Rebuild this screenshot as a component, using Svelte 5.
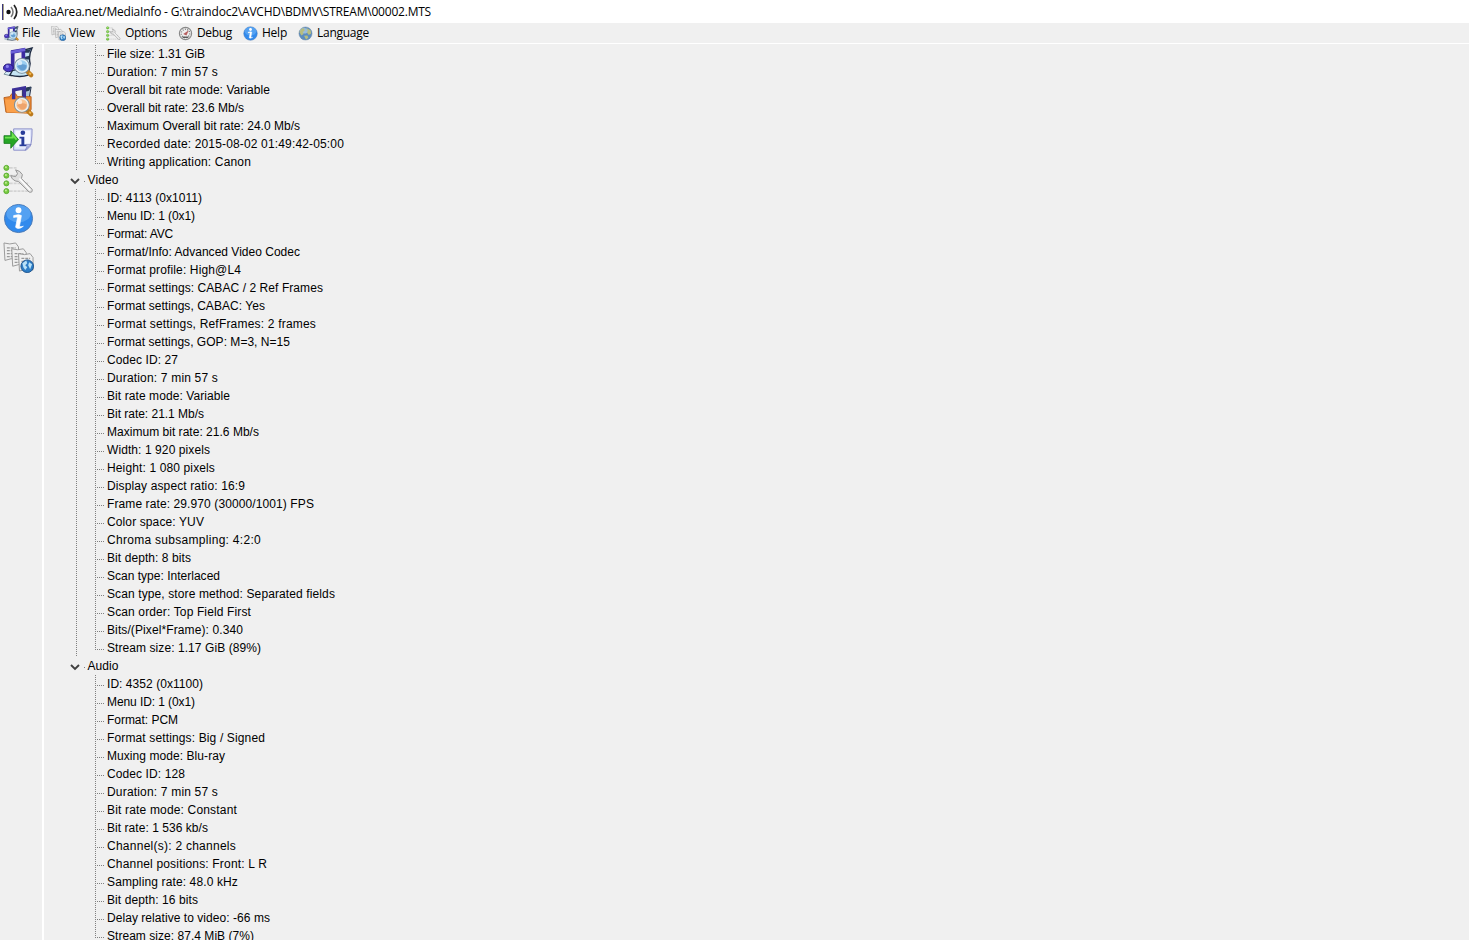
<script>
  const title =
    "MediaArea.net/MediaInfo - G:\\traindoc2\\AVCHD\\BDMV\\STREAM\\00002.MTS";

  const menus = [
    { label: "File", icon: "file", width: 47, text: 18 },
    { label: "View", icon: "export", width: 55, text: 26 },
    { label: "Options", icon: "options", width: 72, text: 42 },
    { label: "Debug", icon: "debug", width: 65, text: 35 },
    { label: "Help", icon: "info", width: 55, text: 25 },
    { label: "Language", icon: "globe", width: 80, text: 52 }
  ];

  const tools = ["file", "folder", "import", "options", "info", "export"];

  // each row: label and its rendered width in pixels
  const sections = [
    {
      name: "",
      rows: [
        ["File size: 1.31 GiB", 98],
        ["Duration: 7 min 57 s", 111],
        ["Overall bit rate mode: Variable", 163],
        ["Overall bit rate: 23.6 Mb/s", 137],
        ["Maximum Overall bit rate: 24.0 Mb/s", 193],
        ["Recorded date: 2015-08-02 01:49:42-05:00", 237],
        ["Writing application: Canon", 144]
      ]
    },
    {
      name: "Video",
      rows: [
        ["ID: 4113 (0x1011)", 95],
        ["Menu ID: 1 (0x1)", 88],
        ["Format: AVC", 66],
        ["Format/Info: Advanced Video Codec", 193],
        ["Format profile: High@L4", 134],
        ["Format settings: CABAC / 2 Ref Frames", 216],
        ["Format settings, CABAC: Yes", 158],
        ["Format settings, RefFrames: 2 frames", 209],
        ["Format settings, GOP: M=3, N=15", 183],
        ["Codec ID: 27", 71],
        ["Duration: 7 min 57 s", 111],
        ["Bit rate mode: Variable", 123],
        ["Bit rate: 21.1 Mb/s", 97],
        ["Maximum bit rate: 21.6 Mb/s", 152],
        ["Width: 1 920 pixels", 103],
        ["Height: 1 080 pixels", 108],
        ["Display aspect ratio: 16:9", 138],
        ["Frame rate: 29.970 (30000/1001) FPS", 207],
        ["Color space: YUV", 97],
        ["Chroma subsampling: 4:2:0", 154],
        ["Bit depth: 8 bits", 84],
        ["Scan type: Interlaced", 113],
        ["Scan type, store method: Separated fields", 228],
        ["Scan order: Top Field First", 144],
        ["Bits/(Pixel*Frame): 0.340", 136],
        ["Stream size: 1.17 GiB (89%)", 154]
      ]
    },
    {
      name: "Audio",
      last: true,
      rows: [
        ["ID: 4352 (0x1100)", 96],
        ["Menu ID: 1 (0x1)", 88],
        ["Format: PCM", 71],
        ["Format settings: Big / Signed", 158],
        ["Muxing mode: Blu-ray", 118],
        ["Codec ID: 128", 78],
        ["Duration: 7 min 57 s", 111],
        ["Bit rate mode: Constant", 130],
        ["Bit rate: 1 536 kb/s", 101],
        ["Channel(s): 2 channels", 129],
        ["Channel positions: Front: L R", 160],
        ["Sampling rate: 48.0 kHz", 131],
        ["Bit depth: 16 bits", 91],
        ["Delay relative to video: -66 ms", 163],
        ["Stream size: 87.4 MiB (7%)", 147]
      ]
    }
  ];

  // stretch or tighten a label so that it fills the given width
  function fit(node, width) {
    const natural = node.getBoundingClientRect().width;
    node.style.letterSpacing = `${(width - natural) / node.textContent.length}px`;
  }
</script>

{#snippet icon(name)}
  <svg class="icon" viewBox="0 0 32 32" aria-hidden="true">
    {#if name === "file"}
      <path d="M5 24L10 26L9 30L1 28Z" fill="#d8eef9" stroke="#78909c" />
      <path d="M22 3L30 1Q26 9 28 17L26 29Q18 32 7 29L10 24L21 22Z" fill="#c5e4f4" stroke="#1d2941" stroke-width="1.4" />
      <path d="M23 3L29 2L27 6L22 6ZM23 10L27 9L27 13H22Z" fill="#273a57" />
      <path d="M10 23V5L21 3V17" fill="none" stroke="#3a2ba0" stroke-width="3.8" />
      <path d="M8 4L23 1V4L8 7Z" fill="#6c61d8" />
      <ellipse cx="5.5" cy="21.5" rx="5" ry="4" fill="#4938c2" stroke="#251878" />
      <circle cx="4.5" cy="20" r="1.6" fill="#8c83ed" />
      {@render lens("#9acdf0", "#518dc8")}
    {:else if name === "folder"}
      <path d="M20 3L29 1L27 13H20Z" fill="#a8c5d8" stroke="#202c47" />
      <path d="M23 2L29 1L27 5L23 6Z" fill="#273a57" />
      <path d="M1 12L7 11L9 8H13L15 11H29V24L27 28L3 27Z" fill="#ef8930" stroke="#b76120" />
      <path d="M11 14V4L22 2V12" fill="none" stroke="#3c3098" stroke-width="3.5" />
      <path d="M2 14H28L25 28L4 27Z" fill="#fba04a" />
      {@render lens("#fbc391", "#e99a60")}
    {:else if name === "import"}
      <path d="M11 4H30Q30 18 28 22L24 26H11Z" fill="#dfe5fb" stroke="#8a8ec8" />
      <path d="M13 6H28V19L23 23H13Z" fill="#f5f8ff" />
      <path d="M29 20L23 26Q26 22 24 20Z" fill="#b7bee8" stroke="#7378bb" stroke-width=".7" />
      <circle cx="20.5" cy="8" r="2.4" fill="#283d9b" />
      <path d="M17 12H22V20H24V22H17V20H19V14H17Z" fill="#283d9b" />
      <path d="M1 11H8V6L16 15L8 24V19H1Z" fill="#26a526" stroke="#13791a" stroke-width=".8" />
      <path d="M2 13H10V10L14 15" fill="none" stroke="#6ce34e" stroke-width="2" />
    {:else if name === "options"}
      {#each [4, 12, 20, 28] as y}
        <path d="M7 {y}H{y > 18 ? 27 : 14}" stroke="#d3d3d3" stroke-width="2" stroke-dasharray="3 1" />
        <circle cx="3.5" cy={y} r="2.6" fill="#77ca3f" stroke="#5fae38" />
        <circle cx="3" cy={y - 0.7} r="1" fill="#c5ef9a" />
      {/each}
      <path d="M8 12L13 13L15 10L13 6Q18 7 20 11L19 15L30 26Q31 30 27 29L16 18Q10 18 8 12Z" fill="#e0e0e0" stroke="#929292" />
      <path d="M17 15L28 27" stroke="#fff" stroke-width="1.5" />
    {:else if name === "info"}
      <circle cx="16" cy="16" r="14.5" fill="#318aed" stroke="#4a79b5" />
      <ellipse cx="16" cy="11" rx="12.5" ry="9" fill="#66adf5" opacity=".65" />
      <circle cx="16" cy="7.5" r="3" fill="#fff" />
      <path d="M11 13Q17 11 19 13L17 24Q18 25 21 24Q16 28 13 25L15 15Q14 14 11 15Z" fill="#fff" stroke="#fff" stroke-width=".7" />
    {:else if name === "export"}
      {#each [[1, 1], [9, 7], [16, 12]] as [x, y]}
        <path d="M{x} {y}Q{x + 6} {y + 2} {x + 12} {y}L{x + 15} {y + 4}V{y + 17}Q{x + 7} {y + 15} {x + 1} {y + 18}Z" fill="#f0f0f0" stroke="#999" />
        <path d="M{x + 3} {y + 5}h9m-9 3h9m-9 3h9m-9 3h9" stroke="#999" stroke-width="1.3" stroke-dasharray="3 1" />
      {/each}
      <circle cx="25" cy="25" r="6.5" fill="#2d7dc6" stroke="#1f558e" />
      <path d="M20 22L24 19L25 22L23 24L25 26L23 29L21 26ZM27 21L30 23L28 28L26 24Z" fill="#b9e1f7" />
    {:else if name === "globe"}
      <circle cx="16" cy="16" r="14" fill="#5b8cc0" stroke="#7390a8" />
      <ellipse cx="13" cy="10" rx="9" ry="6" fill="#b5d2e6" opacity=".7" />
      <path d="M3 13L7 6L13 5L14 10L10 13L12 17L7 20ZM18 4L27 9L28 16L23 19L19 14L21 10ZM13 21L20 20L22 25L17 29Z" fill="#b7bd7e" />
    {:else}
      <circle cx="16" cy="16" r="13" fill="#eee" stroke="#888" stroke-width="2.5" />
      <circle cx="16" cy="16" r="9" fill="none" stroke="#777" stroke-width="3" stroke-dasharray="2 3" />
      <path d="M11 17L23 9L18 20Z" fill="#b86060" />
      <path d="M10 24H22" stroke="#555" stroke-width="3" />
    {/if}
  </svg>
{/snippet}

{#snippet lens(light, deep)}
  <path d="M25 25L29 29" stroke="#bc7a1d" stroke-width="4.5" stroke-linecap="round" />
  <path d="M27 27L29 28" stroke="#f3ba4d" stroke-width="2" />
  <circle cx="19.5" cy="19.5" r="7.6" fill={light} stroke="#7c8f9c" stroke-width="1.2" />
  <circle cx="19.5" cy="19.5" r="6.4" fill="none" stroke="#e8f2f6" stroke-width="1.3" />
  <path d="M14.5 20Q19 16 24.5 19Q24 25 18.5 24Z" fill={deep} opacity=".75" />
  <circle cx="17.5" cy="16.5" r="2.3" fill="#fff" opacity=".6" />
{/snippet}

<div class="window">
  <header class="titlebar">
    <svg class="logo" viewBox="0 0 18 18" aria-hidden="true">
      <path d="M.5 1V17" stroke="#39367d" />
      <path d="M1.5 1V17" stroke="#a6a083" />
      <circle cx="6.5" cy="9" r="2.2" fill="#111" />
      <path d="M9 4Q13 9 9 14" fill="none" stroke="#777" stroke-width="1.5" />
      <path d="M12 2Q17.5 9 12 16" fill="none" stroke="#222" stroke-width="1.7" />
    </svg>
    <span class="title" use:fit={408}>{title}</span>
  </header>

  <nav class="menubar">
    {#each menus as menu}
      <div class="menu" style:width="{menu.width}px">
        {@render icon(menu.icon)}
        <span use:fit={menu.text}>{menu.label}</span>
      </div>
    {/each}
  </nav>

  <div class="body">
    <aside class="toolbar">
      {#each tools as tool}
        <button type="button" aria-label={tool}>{@render icon(tool)}</button>
      {/each}
    </aside>

    <main class="tree">
      {#each sections as section}
        {#if section.name}
          <div class="heading">
            <svg class="chevron" viewBox="0 0 10 7" aria-hidden="true">
              <path d="M1 1L5 5L9 1" />
            </svg>
            <i class="dot"></i>
            <span use:fit={31}>{section.name}</span>
          </div>
        {/if}
        <ul class:last={section.last}>
          {#each section.rows as [label, width]}
            <li>
              <i class="branch"></i>
              <span use:fit={width}>{label}</span>
            </li>
          {/each}
        </ul>
      {/each}
    </main>
  </div>
</div>

<style>
  :global(body) {
    overflow: hidden;
  }

  .window {
    display: flex;
    flex-direction: column;
    height: 940px;
    background: #f0f0f0;
    color: #000;
    font: 12px/18px "Liberation Sans", Arial, sans-serif;
    white-space: nowrap;
    overflow: hidden;
  }

  .titlebar {
    display: flex;
    flex: 0 0 23px;
    align-items: center;
    gap: 3px;
    padding-left: 2px;
    background: #fff;
    font-family: "Open Sans", "Noto Sans", sans-serif;
  }

  .logo {
    width: 18px;
    height: 18px;
  }

  .menubar {
    display: flex;
    flex: 0 0 20px;
    padding-left: 4px;
    border-bottom: 1px solid #fff;
    font-family: "Open Sans", "Noto Sans", sans-serif;
  }

  .menu {
    display: flex;
    flex: none;
    align-items: center;
    gap: 3px;
  }

  .menu:nth-child(n + 3) {
    gap: 4px;
  }

  .menu .icon {
    flex: none;
    width: 15px;
    height: 15px;
    margin-top: 1px;
  }

  .body {
    display: flex;
    flex: 1;
    min-height: 0;
  }

  .toolbar {
    display: flex;
    flex: 0 0 44px;
    flex-direction: column;
    box-sizing: border-box;
    border-right: 2px solid #fff;
  }

  .toolbar button {
    height: 39px;
    padding: 0 0 0 3px;
    border: 0;
    background: none;
    text-align: left;
  }

  .toolbar .icon {
    display: block;
    width: 31px;
    height: 31px;
    margin-top: -3px;
  }

  .tree {
    flex: 1;
    padding: 1px 0 0 32px;
    overflow: hidden;
  }

  ul {
    margin: 0;
    padding: 0 0 0 19px;
    list-style: none;
    background: repeating-linear-gradient(#808080 0 1px, transparent 1px 2px) 0 0 / 1px 100% no-repeat;
  }

  ul.last {
    background: none;
  }

  li {
    display: flex;
    height: 18px;
    background: repeating-linear-gradient(#808080 0 1px, transparent 1px 2px) 0 0 / 1px 100% no-repeat;
  }

  li:last-child {
    background-size: 1px 11px;
  }

  .branch {
    flex: none;
    width: 9px;
    height: 1px;
    margin: 10px 3px 0 0;
    background: repeating-linear-gradient(90deg, #808080 0 1px, transparent 1px 2px);
  }

  .heading {
    display: flex;
    align-items: center;
    height: 18px;
    margin-left: -6px;
  }

  .chevron {
    width: 10px;
    height: 7px;
    margin-top: 2px;
  }

  .chevron path {
    fill: none;
    stroke: #404040;
    stroke-width: 1.9;
  }

  .dot {
    width: 1px;
    height: 1px;
    margin: 2px 2.5px 0 4px;
    background: #808080;
  }
</style>
